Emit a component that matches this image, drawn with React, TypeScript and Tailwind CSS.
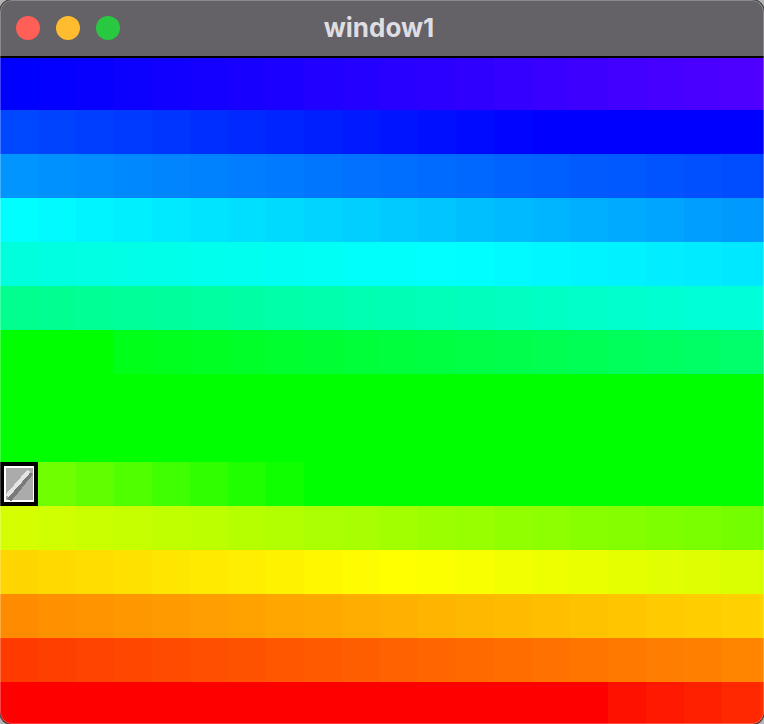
// [hue at left, hue at right] for each row of tiles
const rows: [number, number][] = [
  [240, 259],
  [223, 240],
  [205, 223],
  [180, 205],
  [172, 186],
  [153, 172],
  [126, 146],
  [120, 120],
  [120, 120],
  [90, 120],
  [70, 94],
  [50, 70],
  [33, 50],
  [14, 32],
  [0, 10],
];

const COLS = 21;

function cellHue(row: number, col: number) {
  const [from, to] = rows[row];
  if (row === 1) return Math.min(240, from + (col * (to - from)) / 14);
  if (row === 6) return col < 3 ? 120 : from + ((col - 3) * (to - from)) / 17;
  if (row === 9) return Math.min(120, from + (col * (to - from)) / 8);
  if (row === 14) return col < 16 ? 0 : 4 + (col - 16) * 1.8;
  return from + (col * (to - from)) / (COLS - 1);
}

function SelectedTile() {
  return (
    <svg width="38" height="44" viewBox="0 0 38 44" className="absolute left-0 top-0" shapeRendering="crispEdges">
      <rect width="38" height="44" fill="#000" />
      <rect x="4" y="4" width="30" height="36" fill="#fff" />
      <rect x="6" y="6" width="27" height="32" fill="#ababab" />
      <path d="M9 38L31 11" stroke="#7a7a7a" strokeWidth="5" fill="none" />
      <path d="M7 34L29 9" stroke="#e4e4e4" strokeWidth="4" fill="none" />
    </svg>
  );
}

export default function App() {
  return (
    <div className="relative h-[724px] w-[764px] overflow-hidden bg-[#b5b5b5]">
      <div className="flex h-full flex-col overflow-hidden rounded-[12px] bg-black">
        <div className="relative flex h-[58px] shrink-0 items-center justify-center border-b-2 border-black bg-[#646266] pr-[6px]">
          <div className="absolute left-[16px] top-[16px] flex gap-[16px]">
            <span className="h-6 w-6 rounded-full bg-[#ff5f57]" />
            <span className="h-6 w-6 rounded-full bg-[#febc2e]" />
            <span className="h-6 w-6 rounded-full bg-[#28c840]" />
          </div>
          <span className="font-['Inter',sans-serif] text-[26px] font-bold leading-none text-[#dedde2]">window1</span>
        </div>
        <div className="flex flex-1 flex-col">
          {rows.map((_, r) => (
            <div key={r} className={r === 0 ? "relative flex h-[52px] shrink-0" : "relative flex h-[44px] shrink-0"}>
              {Array.from({ length: COLS }).map((_, c) => (
                <div
                  key={c}
                  className="h-full w-[38px] shrink-0"
                  style={{ backgroundColor: `hsl(${cellHue(r, c)} 100% 50%)` }}
                />
              ))}
              {r === 9 && <SelectedTile />}
            </div>
          ))}
        </div>
      </div>
      {/* window edge highlight sits over the content */}
      <div className="pointer-events-none absolute inset-0 rounded-[12px] border border-white/25 shadow-[0_0_0_1px_#3a3a3a]" />
    </div>
  );
}
